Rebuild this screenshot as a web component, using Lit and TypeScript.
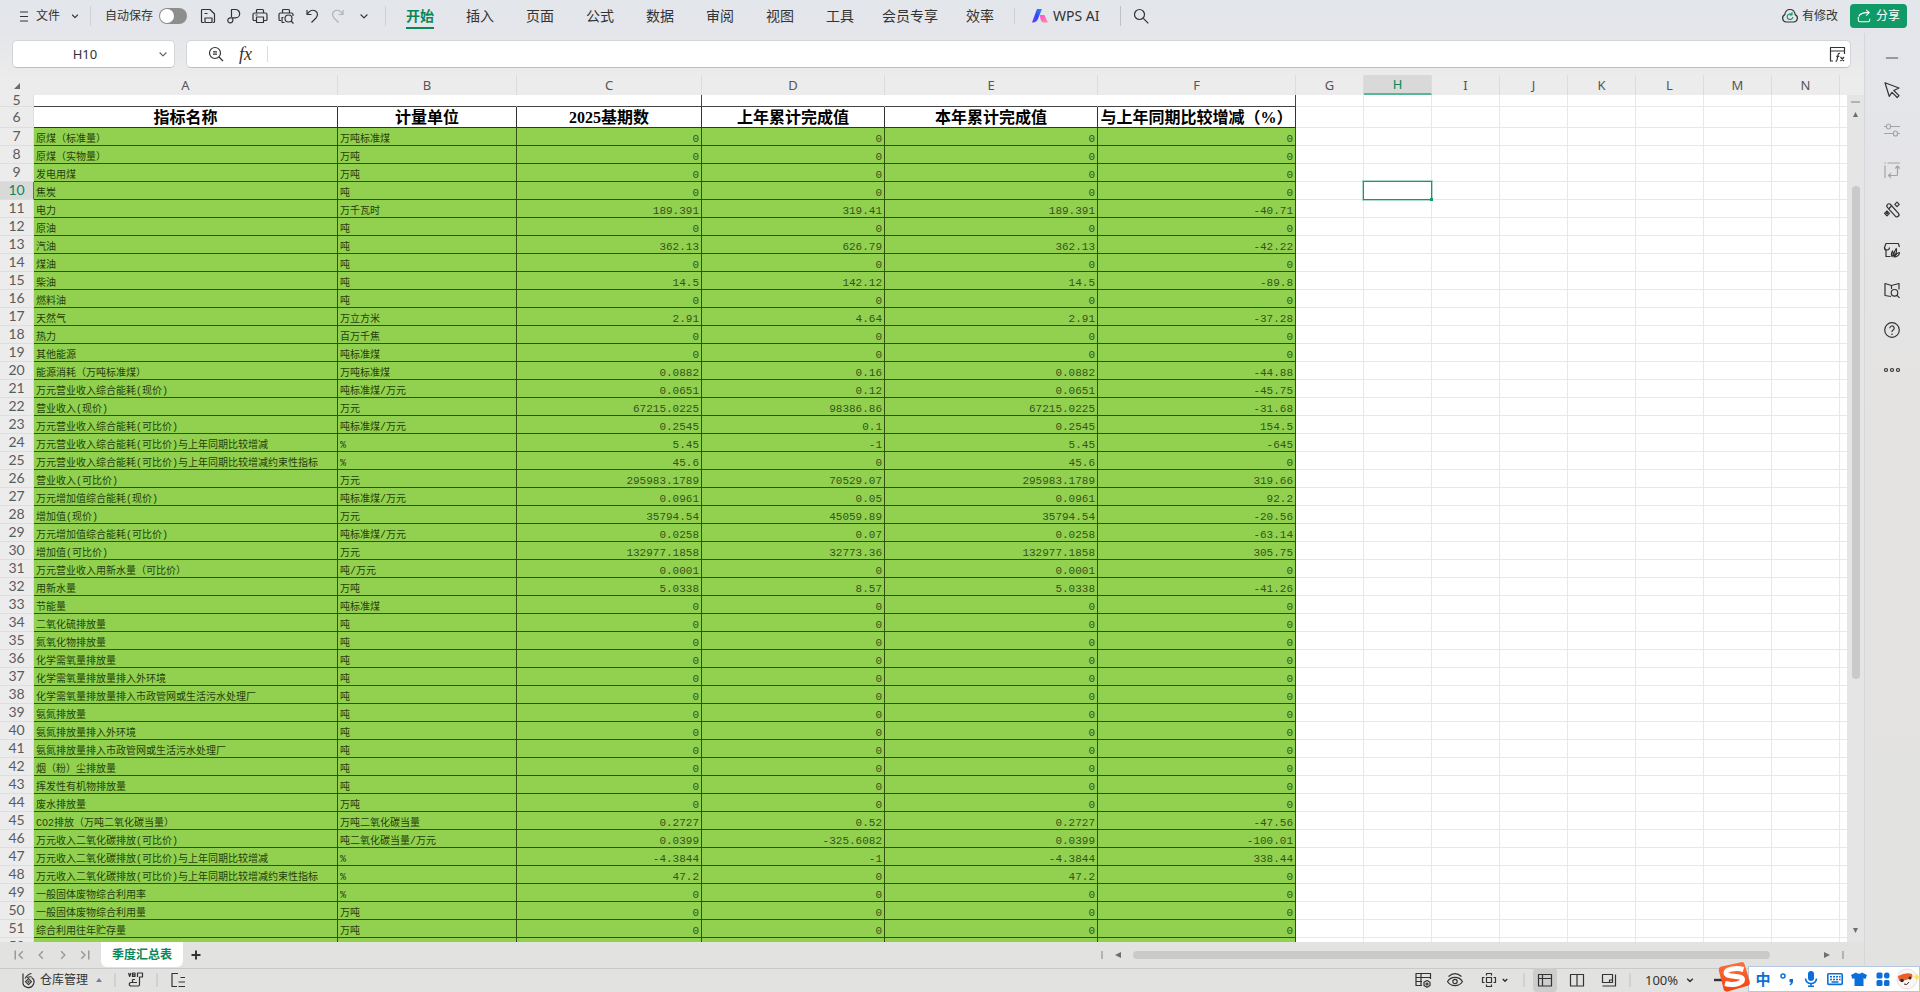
import { LitElement, html, css, svg, nothing } from "lit";
import { customElement, property, state } from "lit/decorators.js";
import { classMap } from "lit/directives/class-map.js";

type Row = [string, string, string, string, string, string];

const zero = (name: string, unit: string): Row => [name, unit, "0", "0", "0", "0"];

const HEADINGS = ["指标名称", "计量单位", "2025基期数", "上年累计完成值", "本年累计完成值", "与上年同期比较增减（%）"];

const ROWS: Row[] = [
  zero("原煤（标准量）", "万吨标准煤"),
  zero("原煤（实物量）", "万吨"),
  zero("发电用煤", "万吨"),
  zero("焦炭", "吨"),
  ["电力", "万千瓦时", "189.391", "319.41", "189.391", "-40.71"],
  zero("原油", "吨"),
  ["汽油", "吨", "362.13", "626.79", "362.13", "-42.22"],
  zero("煤油", "吨"),
  ["柴油", "吨", "14.5", "142.12", "14.5", "-89.8"],
  zero("燃料油", "吨"),
  ["天然气", "万立方米", "2.91", "4.64", "2.91", "-37.28"],
  zero("热力", "百万千焦"),
  zero("其他能源", "吨标准煤"),
  ["能源消耗（万吨标准煤）", "万吨标准煤", "0.0882", "0.16", "0.0882", "-44.88"],
  ["万元营业收入综合能耗(现价)", "吨标准煤/万元", "0.0651", "0.12", "0.0651", "-45.75"],
  ["营业收入(现价)", "万元", "67215.0225", "98386.86", "67215.0225", "-31.68"],
  ["万元营业收入综合能耗(可比价)", "吨标准煤/万元", "0.2545", "0.1", "0.2545", "154.5"],
  ["万元营业收入综合能耗(可比价)与上年同期比较增减", "%", "5.45", "-1", "5.45", "-645"],
  ["万元营业收入综合能耗(可比价)与上年同期比较增减约束性指标", "%", "45.6", "0", "45.6", "0"],
  ["营业收入(可比价)", "万元", "295983.1789", "70529.07", "295983.1789", "319.66"],
  ["万元增加值综合能耗(现价)", "吨标准煤/万元", "0.0961", "0.05", "0.0961", "92.2"],
  ["增加值(现价)", "万元", "35794.54", "45059.89", "35794.54", "-20.56"],
  ["万元增加值综合能耗(可比价)", "吨标准煤/万元", "0.0258", "0.07", "0.0258", "-63.14"],
  ["增加值(可比价)", "万元", "132977.1858", "32773.36", "132977.1858", "305.75"],
  ["万元营业收入用新水量（可比价）", "吨/万元", "0.0001", "0", "0.0001", "0"],
  ["用新水量", "万吨", "5.0338", "8.57", "5.0338", "-41.26"],
  zero("节能量", "吨标准煤"),
  zero("二氧化硫排放量", "吨"),
  zero("氮氧化物排放量", "吨"),
  zero("化学需氧量排放量", "吨"),
  zero("化学需氧量排放量排入外环境", "吨"),
  zero("化学需氧量排放量排入市政管网或生活污水处理厂", "吨"),
  zero("氨氮排放量", "吨"),
  zero("氨氮排放量排入外环境", "吨"),
  zero("氨氮排放量排入市政管网或生活污水处理厂", "吨"),
  zero("烟（粉）尘排放量", "吨"),
  zero("挥发性有机物排放量", "吨"),
  zero("废水排放量", "万吨"),
  ["CO2排放（万吨二氧化碳当量）", "万吨二氧化碳当量", "0.2727", "0.52", "0.2727", "-47.56"],
  ["万元收入二氧化碳排放(可比价)", "吨二氧化碳当量/万元", "0.0399", "-325.6082", "0.0399", "-100.01"],
  ["万元收入二氧化碳排放(可比价)与上年同期比较增减", "%", "-4.3844", "-1", "-4.3844", "338.44"],
  ["万元收入二氧化碳排放(可比价)与上年同期比较增减约束性指标", "%", "47.2", "0", "47.2", "0"],
  zero("一般固体废物综合利用率", "%"),
  zero("一般固体废物综合利用量", "万吨"),
  zero("综合利用往年贮存量", "万吨"),
  ["", "", "", "", "", ""],
];

const COLUMNS = [..."ABCDEFGHIJKLMN"];
const BLANK_COLUMNS = COLUMNS.slice(6);
const TABS = ["开始", "插入", "页面", "公式", "数据", "审阅", "视图", "工具", "会员专享", "效率"];

const ICONS = {
  menu: svg`<path d="M4 4h8M4 8.500h8M4 13h8"/>`,
  down: svg`<path d="M3.500 6 8 10.500 12.500 6"/>`,
  save: svg`<path d="M4 14.500H2.500a1 1 0 0 1-1-1v-11a1 1 0 0 1 1-1H10l4.500 4.500v7.500a1 1 0 0 1-1 1H13"/><path d="M4.500 5.500h3M5 14.500V10h7v4.500z"/>`,
  pdf: svg`<path d="M5.500 9V1.500h4a4.200 4.200 0 0 1 0 8.400H4.500a2.500 2.500 0 1 0 2.300 2.600V10"/>`,
  print: svg`<path d="M4.500 5V2.500a1 1 0 0 1 1-1h5a1 1 0 0 1 1 1V5M4 12.500H2a1 1 0 0 1-1-1V6.500a1.500 1.500 0 0 1 1.500-1.500h11A1.500 1.500 0 0 1 15 6.500v5a1 1 0 0 1-1 1h-2"/><path d="M4.500 9h7v5.500h-7zM3.500 7h2"/>`,
  preview: svg`<path d="M4.500 5V2.500a1 1 0 0 1 1-1h5a1 1 0 0 1 1 1V5M3 12.500H2a1 1 0 0 1-1-1V6.500A1.500 1.500 0 0 1 2.500 5h11A1.500 1.500 0 0 1 15 6.500V8M4 14.500h2.500M4 14.500V9.500h1.500"/><circle cx="10.500" cy="10.500" r="3.500"/><path d="m13 13 2.500 2.500"/>`,
  undo: svg`<path d="M3 2v4.500h4.500M3.200 6.300C5.500 2.500 9 1.500 11.500 3s2.500 4.800.5 7L7.500 14.500"/>`,
  redo: svg`<path d="M13 2v4.500H8.500M12.800 6.300C10.500 2.500 7 1.500 4.500 3s-2.500 4.800-.5 7l4.500 4.500"/>`,
  search: svg`<circle cx="6.500" cy="6.500" r="5"/><path d="m10.300 10.300 5 5"/>`,
  cloud: svg`<path d="M4.300 14a3.900 3.900 0 0 1-1.500-7.400C3.200 3.700 5.300 1.500 8 1.500s4.800 2.200 5.200 5.100A3.900 3.900 0 0 1 11.700 14z"/><path class="accent" d="M9.500 6.300A2.800 2.800 0 1 0 10.800 9M10 4.200v2.600H7.500"/>`,
  share: svg`<path d="M1.500 9v3.500a2 2 0 0 0 2 2h9a2 2 0 0 0 2-2V11M2 8.500C3.500 5 7.500 3.800 13.500 4.200M10.500 1l3.500 3.200-3.500 3.300"/>`,
  find: svg`<circle cx="7" cy="7" r="5.500"/><path d="M5 5.800h4M5 8.200h4M11 11l4 4"/>`,
  fxBox: svg`<path d="M4 15H1.500V1.500h14V8M1.500 5h14"/><path d="M11 7.500c-1-.5-1.700 0-1.900 1L8 14c-.2 1-.6 1.200-1.500 1M7.300 10.300h3M11.500 11l3.500 4M15 11l-3.500 4"/>`,
  arrow: svg`<path d="m1 .800 14 5.200-5.200 2.500 5.200 5.200-1.800 1.800L8 10.300l-2.800 4z"/>`,
  sliders: svg`<path d="M0 4.500h2.500M7 4.500h9M0 11.500h9M13.500 11.500H16"/><rect x="2.500" y="2" width="4" height="5" rx="2"/><rect x="9.500" y="9" width="4" height="5" rx="2"/>`,
  transform: svg`<path d="M3.500 1H16M1 3.500V16M.300 1h1.500M13.500 4v8.500a1 1 0 0 1-1 1H5M11.300 6.500l2.200-2.500 2.200 2.500M7 11.300l-2.500 2.200L7 15.700"/>`,
  magic: svg`<rect x="-2" y="-7.500" width="4.200" height="16" rx="2.100" transform="translate(8.500 8) rotate(-42)"/><path d="m4.500 7 3-3"/><path d="m13 .200 2.200 2.200L13 4.600l-2.200-2.200zM3 8.800l2.500 2.500L3 13.800.500 11.300z"/><circle cx="3" cy="11.300" r=".700"/>`,
  sketch: svg`<path d="M6.500 14.500H2V8.300A2.800 2.800 0 0 1 .500 5.500L2 1.500h12.300l1.200 3.500"/><path d="M.500 5.500a2.500 2.500 0 0 0 5 0"/><path d="M8 14.500c-1-2-.7-3.800.5-5.500 1 2 .8 4-.5 5.500zM10 14.800c-.5-3.300.4-5.800 2.200-8.300.8 3 0 5.800-2.200 8.300zM11 15c.5-2.500 2-4 4.500-4.500-.2 2.500-1.800 4-4.500 4.500z"/>`,
  book: svg`<path d="M7.500 3.500 1 1.500v12l6 1M7.500 3.500 15 1.500v6M7.500 3.500V7"/><circle cx="10.500" cy="10.800" r="3.300"/><path d="m13 13.300 2.500 2.500"/>`,
  help: svg`<circle cx="8" cy="8" r="7.300"/><path d="M5.800 6.200a2.200 2.200 0 1 1 3.300 1.900c-.8.500-1.100.9-1.100 1.900M8 11.500V13"/>`,
  more: svg`<circle cx="2" cy="8" r="1.500"/><circle cx="8" cy="8" r="1.500"/><circle cx="14" cy="8" r="1.500"/>`,
  store: svg`<path d="M3 1.500v8a5.500 5.500 0 1 0 8.500-4M5 6.500C6.500 4 8.500 2 11.500 1.500M7 5.500 11.500 4.500"/><path d="m8.500 6.700 3 3-3 3-3-3z"/><circle cx="8.500" cy="9.700" r=".500"/>`,
  vba: svg`<path d="M.500 1l1.200 3.500L2.900 1M4.500 1v3.500H7V1zM4.500 2.800H7M9.500 5V1H14.500v4H11.500v7.500a1.500 1.500 0 0 1-1.500 1.500H3a1.600 1.600 0 1 1 0-3.500h6M4.500 7.500v3M4.500 7.500H7"/>`,
  outline: svg`<path d="M8 1.500H2v13h5M10.500 5.500H15M8.500 10h6.500M8.500 14.500h6.500"/>`,
  tableCog: svg`<path d="M7 13.500H1v-12h14.500V7M1 5.500h14.500M1 9.500h6M6 1.500v12"/><path d="m12 8.500 3 1.700v3.300l-3 1.800-3-1.800v-3.300z"/><circle cx="12" cy="12" r="1"/>`,
  eye: svg`<path d="M1.500 4.500c4-3.500 9-3.500 13 0M.500 9.500C4 4 12 4 15.500 9.500 12 15 4 15 .500 9.500z"/><circle cx="8" cy="9.500" r="2.200"/>`,
  cross: svg`<rect x="5.500" y="5.500" width="5" height="5"/><path d="M5.500 3.500v-2h5v2M5.500 12.500v2h5v-2M3.500 5.500h-2v5h2M12.500 5.500h2v5h-2"/>`,
  normal: svg`<rect x="1.500" y="2.500" width="13" height="11.500"/><path d="M5.500 2.500V14M1.500 6.500h13"/>`,
  split: svg`<rect x="1.500" y="2.500" width="13" height="11.500"/><path d="M8 2.500V14"/>`,
  pages: svg`<path d="M1.500 2.500h10v8h-10zM14.500 2.500V14h-13M8.500 10.500v-2.500h3"/>`,
  minus: svg`<path d="M1 8h14"/>`,
  plus: svg`<path d="M8 2v12M2 8h12"/>`,
  first: svg`<path d="M3 2v12M13 3 8 8l5 5"/>`,
  prev: svg`<path d="M10.500 3 5.500 8l5 5"/>`,
  next: svg`<path d="m5.500 3 5 5-5 5"/>`,
  last: svg`<path d="M13 2v12M3 3l5 5-5 5"/>`,
};
type IconName = keyof typeof ICONS;

@customElement("ui-icon")
export class UiIcon extends LitElement {
  @property() name: IconName = "more";

  static styles = css`
    :host { display: block; width: 16px; height: 16px; flex: none; }
    svg { display: block; width: 100%; height: 100%; overflow: visible; fill: none; stroke: currentColor; stroke-width: var(--stroke, 1.2); stroke-linejoin: round; }
    .accent { stroke: #109a68; }
  `;

  render() {
    return html`<svg viewBox="0 0 16 16" aria-hidden="true">${ICONS[this.name]}</svg>`;
  }
}

const base = css`
  * { box-sizing: border-box; }
  button, input, select { font: inherit; color: inherit; margin: 0; padding: 0; border: 0; background: none; outline: none; }
  button { display: flex; align-items: center; justify-content: center; white-space: nowrap; }
  .sep { width: 1px; height: 20px; background: #cfd2d5; flex: none; }
  .tiny { width: 10px; height: 10px; --stroke: 1.8; }
`;

@customElement("menu-bar")
export class MenuBar extends LitElement {
  @state() private active = "开始";

  static styles = [base, css`
    :host { display: flex; align-items: center; justify-content: space-between; height: 33px; padding: 0 13px 2px 16px; }
    .group { display: flex; align-items: center; }
    .file { gap: 4px; }
    .file .tiny { margin-left: 6px; }
    .file + .sep { margin: 0 14px 0 10px; }
    .autosave { display: flex; align-items: center; gap: 6px; }
    .autosave input { appearance: none; width: 28px; height: 16px; border-radius: 8px; background: #8d8d8d; }
    .autosave input::before { content: ""; display: block; width: 14px; height: 14px; margin: 1px; border-radius: 7px; background: #fff; }
    .quick { display: flex; margin: 0 8px; }
    .quick button { width: 26px; height: 26px; }
    .quick .off { color: #b0b2b5; }
    .quick .tiny { width: 12px; height: 12px; --stroke: 1.5; }
    .tabs { display: flex; margin-left: 4px; }
    .tab { min-width: 60px; height: 31px; padding: 0 12px; font-size: 14px; line-height: 20px; }
    .tab span { padding: 4px 0 1px; border-bottom: 2px solid transparent; }
    .tab.on span { color: #0b8659; font-weight: 700; border-color: #0b8659; }
    .tabs + .sep { margin: 0 17px 0 4px; height: 16px; }
    .ai { gap: 5px; font-size: 14px; }
    .ai svg { width: 16px; height: 14px; }
    .ai + .sep { height: 20px; margin: 0 12px 0 20px; background: #bfc2c6; }
    .changes { gap: 4px; margin-right: 12px; }
    .share { height: 24px; padding: 0 7px; gap: 5px; border-radius: 4px; background: #109a68; color: #fff; }
    .share ui-icon { width: 14px; height: 14px; }
  `];

  render() {
    const quick: IconName[] = ["save", "pdf", "print", "preview", "undo", "redo"];
    return html`
      <div class="group">
        <button class="file"><ui-icon name="menu"></ui-icon>文件<ui-icon class="tiny" name="down"></ui-icon></button>
        <span class="sep"></span>
        <label class="autosave">自动保存<input type="checkbox" role="switch" /></label>
        <div class="quick">
          ${quick.map((n) => html`<button class=${classMap({ off: n === "redo" })} aria-label=${n}><ui-icon name=${n}></ui-icon></button>`)}
          <button aria-label="more"><ui-icon class="tiny" name="down"></ui-icon></button>
        </div>
        <span class="sep"></span>
        <nav class="tabs">
          ${TABS.map((t) => html`<button class=${classMap({ tab: true, on: t === this.active })} @click=${() => (this.active = t)}><span>${t}</span></button>`)}
        </nav>
        <span class="sep"></span>
        <button class="ai">
          <svg viewBox="0 0 16 14" aria-hidden="true">
            <defs>
              <linearGradient id="a" x1="0" y1="1" x2="1" y2="0"><stop offset="0" stop-color="#6a3df5" /><stop offset=".5" stop-color="#2b4df2" /><stop offset="1" stop-color="#2f8dff" /></linearGradient>
              <linearGradient id="b" x1="0" y1="0" x2="1" y2="1"><stop offset="0" stop-color="#ff4fd0" /><stop offset="1" stop-color="#ff8f9a" /></linearGradient>
            </defs>
            <path fill="url(#a)" d="M5 0h5L6.500 8.500C5.500 12 4 13.500 0 13.500z" />
            <path fill="url(#b)" d="M8 6h4.500L16 13.500h-4.500C9.500 13.500 8 10 8 6z" />
          </svg>WPS AI
        </button>
        <span class="sep"></span>
        <button aria-label="search"><ui-icon name="search"></ui-icon></button>
      </div>
      <div class="group">
        <button class="changes"><ui-icon name="cloud"></ui-icon>有修改</button>
        <button class="share"><ui-icon name="share"></ui-icon>分享</button>
      </div>
    `;
  }
}

@customElement("formula-bar")
export class FormulaBar extends LitElement {
  static styles = [base, css`
    :host { display: flex; gap: 11px; padding: 7px 13px 7px 12px; }
    .box { display: flex; align-items: center; height: 28px; border: 1px solid #d3d4d6; border-bottom-color: #bcbdbf; border-radius: 5px; background: #fff; }
    .name { width: 163px; padding-right: 5px; }
    .name input { flex: 1; min-width: 0; text-align: center; font-size: 13px; }
    .name ui-icon { width: 12px; height: 12px; color: #666; --stroke: 1.6; }
    .formula { flex: 1; min-width: 0; padding: 0 5px 0 21px; gap: 15px; }
    .formula input { flex: 1; min-width: 0; height: 20px; }
    .fx { font: italic 18px/20px "Liberation Serif", serif; }
    .sep { height: 16px; background: #dcdcdc; }
  `];

  render() {
    return html`
      <div class="box name"><input aria-label="名称框" .value=${"H10"} /><ui-icon name="down"></ui-icon></div>
      <div class="box formula">
        <ui-icon name="find"></ui-icon>
        <button class="fx">fx</button>
        <span class="sep"></span>
        <input aria-label="编辑栏" />
        <button aria-label="fx"><ui-icon name="fxBox"></ui-icon></button>
      </div>
    `;
  }
}

@customElement("sheet-grid")
export class SheetGrid extends LitElement {
  static styles = [base, css`
    :host { display: flex; flex: 1; min-height: 0; overflow: hidden; }
    .view { flex: 1; min-width: 0; overflow: hidden; background: #fff; }
    table { width: 100%; table-layout: fixed; border-collapse: separate; border-spacing: 0; }
    th, td { padding: 0; overflow: hidden; white-space: nowrap; border: solid #e8e8e8; border-width: 0 1px 1px 0; }
    .w-no { width: 34px; } .w-A { width: 304px; } .w-B { width: 179px; } .w-C { width: 185px; } .w-D { width: 183px; }
    .w-E { width: 213px; } .w-F { width: 198px; } .w-blank { width: 68px; }
    thead th { height: 20px; background: #ececec; border-color: #dcdcdc; border-bottom: 0; font-weight: 400; font-size: 13px; line-height: 18px; color: #555; }
    thead th:last-child, tbody td:last-child { border-right: 0; }
    thead .picked { background: #d9d9d9; color: #0b8659; border-bottom: 2px solid #58b894; }
    .corner { border-right: 0; }
    .corner svg { display: block; width: 6px; height: 6px; margin: 2px 0 0 14px; fill: #6b6b6b; }
    .no { height: 18px; overflow: visible; background: #ececec; border-color: #dedede; font: 400 14px/15px Lato, sans-serif; color: #5b5b5b; vertical-align: top; }
    .no.picked { background: #d9d9d9; color: #0b8659; border-right-color: #109a68; }
    .clipped > * { height: 12px; line-height: 10px; }
    .clipped .data { border-right-color: #fff; border-bottom-color: #444; }
    .clipped .edge { border-right-color: #444; }
    .heads > * { height: 21px; }
    .heads .no { line-height: 19px; }
    .heads .data { padding-top: 1px; font: 700 16px/19px "Liberation Serif", "Noto Sans CJK SC", sans-serif; color: #000; text-align: center; border-color: #333; }
    .cell { height: 18px; padding: 0 2px; vertical-align: bottom; background: #92d14f; border-color: #33510f; color: #24400c; font-size: 10px; line-height: 11px; font-family: "Liberation Mono", "Noto Sans CJK SC", monospace; }
    .num { text-align: right; font-size: 11px; padding-right: 2px; color: #34541a; }
    .selected { position: relative; overflow: visible; }
    .selected::before { content: ""; position: absolute; inset: -1px; border: 1px solid #149a69; box-shadow: 0 0 0 1px rgba(20, 154, 105, 0.35); }
    .selected::after { content: ""; position: absolute; right: -2px; bottom: -2px; width: 3px; height: 3px; background: #149a69; }
    .rail { width: 17px; flex: none; display: flex; flex-direction: column; align-items: center; background: #e5e5e5; }
    .rail-top { width: 100%; height: 20px; background: #ececec; }
    .grip { width: 9px; height: 2px; margin-top: 6px; background: #b3b3b3; }
    .rail svg { width: 5px; height: 5px; fill: #6e6e6e; margin: 9px 0; }
    .track { flex: 1; width: 8px; padding: 60px 0 240px; }
    .thumb { height: 100%; border-radius: 4px; background: #cacaca; }
  `];

  private blanks(row: number) {
    return html`${BLANK_COLUMNS.map((c) => html`<td class=${row === 10 && c === "H" ? "selected" : nothing}></td>`)}<td></td>`;
  }

  render() {
    return html`
      <div class="view">
        <table>
          <colgroup>
            <col class="w-no" />
            ${COLUMNS.map((c, i) => html`<col class=${i < 6 ? `w-${c}` : "w-blank"} />`)}
            <col />
          </colgroup>
          <thead>
            <tr>
              <th class="corner"><svg viewBox="0 0 6 6"><path d="M6 0v6H0z" /></svg></th>
              ${COLUMNS.map((c) => html`<th class=${c === "H" ? "picked" : nothing}>${c}</th>`)}
              <th></th>
            </tr>
          </thead>
          <tbody>
            <tr class="clipped">
              <th class="no">5</th>
              ${HEADINGS.map((_, i) => html`<td class=${classMap({ data: true, edge: i === 2 || i === 5 })}></td>`)}
              ${this.blanks(5)}
            </tr>
            <tr class="heads">
              <th class="no">6</th>
              ${HEADINGS.map((h) => html`<th class="data">${h}</th>`)}
              ${this.blanks(6)}
            </tr>
            ${ROWS.map((r, i) => html`
              <tr>
                <th class=${classMap({ no: true, picked: i === 3 })}>${i + 7}</th>
                ${r.map((v, j) => html`<td class=${classMap({ cell: true, num: j > 1 })}>${v}</td>`)}
                ${this.blanks(i + 7)}
              </tr>`)}
          </tbody>
        </table>
      </div>
      <div class="rail">
        <div class="rail-top"></div>
        <div class="grip"></div>
        <svg viewBox="0 0 8 8"><path d="M4 0 8 8H0z" /></svg>
        <div class="track"><div class="thumb"></div></div>
        <svg viewBox="0 0 8 8"><path d="M4 8 0 0h8z" /></svg>
      </div>
    `;
  }
}

@customElement("sheet-tabs")
export class SheetTabs extends LitElement {
  static styles = [base, css`
    :host { display: flex; justify-content: space-between; height: 26px; background: #e2e2e1; }
    .group { display: flex; align-items: center; }
    .left { padding-left: 8px; }
    .nav { width: 22px; height: 26px; color: #9a9a9a; }
    .nav ui-icon, .add ui-icon { width: 12px; height: 12px; --stroke: 2; }
    .sheet { height: 25px; margin: 0 7px 1px 5px; padding: 0 11px; border-radius: 0 0 6px 6px; background: #fff; color: #0b8659; font-weight: 700; }
    .add ui-icon { --stroke: 2.6; }
    .right { flex: 0 1 763px; padding-right: 20px; gap: 12px; }
    .bar { width: 2px; height: 8px; background: #b3b3b3; }
    .right svg { width: 6px; height: 6px; fill: #6e6e6e; }
    .track { flex: 1; padding-right: 42px; }
    .thumb { height: 8px; border-radius: 4px; background: #cacaca; }
  `];

  render() {
    const nav: IconName[] = ["first", "prev", "next", "last"];
    return html`
      <div class="group left">
        ${nav.map((n) => html`<button class="nav" aria-label=${n}><ui-icon name=${n}></ui-icon></button>`)}
        <button class="sheet">季度汇总表</button>
        <button class="add" aria-label="add"><ui-icon name="plus"></ui-icon></button>
      </div>
      <div class="group right">
        <span class="bar"></span>
        <svg viewBox="0 0 8 8"><path d="M0 4 8 0v8z" /></svg>
        <div class="track"><div class="thumb"></div></div>
        <svg viewBox="0 0 8 8"><path d="M8 4 0 8V0z" /></svg>
        <span class="bar"></span>
      </div>
    `;
  }
}

@customElement("side-panel")
export class SidePanel extends LitElement {
  static styles = [base, css`
    :host { display: flex; flex-direction: column; align-items: center; width: 56px; flex: none; padding: 17px 2px 0 0; border-left: 1px solid #d6d7d9; }
    .dash { width: 14px; height: 16px; color: #8f8f8f; --stroke: 2; }
    button { width: 32px; height: 40px; }
    .dash + button { margin-top: 4px; }
    .off { color: #a3a4a6; }
  `];

  render() {
    const items: IconName[] = ["arrow", "sliders", "transform", "magic", "sketch", "book", "help", "more"];
    return html`
      <ui-icon class="dash" name="minus"></ui-icon>
      ${items.map((n) => html`<button class=${classMap({ off: n === "sliders" || n === "transform" })} aria-label=${n}><ui-icon name=${n}></ui-icon></button>`)}
    `;
  }
}

@customElement("status-bar")
export class StatusBar extends LitElement {
  static styles = [base, css`
    :host { display: flex; justify-content: space-between; align-items: center; height: 24px; padding-bottom: 1px; border-top: 1px solid #c9c9c9; }
    .group { display: flex; align-items: center; gap: 8px; }
    .left { padding-left: 20px; gap: 12px; }
    .book { gap: 4px; }
    .book svg { width: 6px; height: 4px; margin-left: 4px; fill: #71809c; }
    .sep { width: 2px; height: 14px; }
    .right { padding-right: 187px; }
    .right button { width: 24px; height: 24px; border-radius: 4px; }
    .right .wide { width: 40px; gap: 4px; }
    .wide .tiny { width: 8px; --stroke: 3; }
    .right .on { background: #cdcdcd; }
    .zoom { display: flex; align-items: center; width: 62px; padding-left: 6px; }
    .zoom select { appearance: none; width: 40px; font-size: 13px; }
    .zoom .tiny { --stroke: 2.4; }
    .minus { --stroke: 2.4; }
  `];

  render() {
    return html`
      <div class="group left">
        <button class="book"><ui-icon name="store"></ui-icon>仓库管理<svg viewBox="0 0 6 4"><path d="M3 0 6 4H0z" /></svg></button>
        <span class="sep"></span>
        <button aria-label="vba"><ui-icon name="vba"></ui-icon></button>
        <span class="sep"></span>
        <button aria-label="outline"><ui-icon name="outline"></ui-icon></button>
      </div>
      <div class="group right">
        <button aria-label="table"><ui-icon name="tableCog"></ui-icon></button>
        <button aria-label="eye"><ui-icon name="eye"></ui-icon></button>
        <button class="wide" aria-label="cross"><ui-icon name="cross"></ui-icon><ui-icon class="tiny" name="down"></ui-icon></button>
        <span class="sep"></span>
        <button class="on" aria-label="normal"><ui-icon name="normal"></ui-icon></button>
        <button aria-label="split"><ui-icon name="split"></ui-icon></button>
        <button aria-label="pages"><ui-icon name="pages"></ui-icon></button>
        <span class="sep"></span>
        <label class="zoom"><select aria-label="缩放"><option>100%</option></select><ui-icon class="tiny" name="down"></ui-icon></label>
        <button class="minus" aria-label="minus"><ui-icon name="minus"></ui-icon></button>
      </div>
    `;
  }
}

@customElement("ime-bar")
export class ImeBar extends LitElement {
  static styles = [base, css`
    :host { position: fixed; right: 0; bottom: 0; display: flex; align-items: center; width: 172px; height: 26px; padding-left: 2px; border: 1px solid #b3c6e2; background: #fff; color: #0a6fd8; }
    button { width: 24px; height: 24px; }
    .zh { font: 700 15px/20px "Noto Sans CJK SC", sans-serif; }
    button svg { width: 16px; height: 16px; fill: currentColor; }
    .face svg { width: 22px; height: 22px; overflow: visible; }
    .logo { position: absolute; right: 168px; bottom: -2px; width: 34px; height: 32px; }
  `];

  render() {
    return html`
      <svg class="logo" viewBox="0 0 34 32" aria-hidden="true">
        <defs><linearGradient id="s" x1="0" y1="0" x2="0" y2="1"><stop offset="0" stop-color="#ff6f3a" /><stop offset="1" stop-color="#f04410" /></linearGradient></defs>
        <path fill="url(#s)" d="M3.500 5.800 24 1.200q3-.5 3.600 2l5.200 17.600q.6 3-2 4L10.500 30.500q-3 .6-3.800-2L1.800 9.500q-.4-3 1.700-3.700z" />
        <path fill="none" stroke="#fff" stroke-width="5" stroke-linecap="butt" d="M26.500 8.500C19 6.500 9 8 9 12c0 4.500 16.500 2 16.500 6.500 0 4.500-10 6-17.500 4" />
      </svg>
      <button class="zh">中</button>
      <button aria-label="punctuation"><svg viewBox="0 0 16 16"><circle cx="4" cy="5" r="2" fill="none" stroke="currentColor" stroke-width="1.500" /><path d="M10.500 8h3.500v3q-.5 3-3 3.500l-.5-1q1.500-.8 1.500-2.200h-1.500z" /></svg></button>
      <button aria-label="microphone"><svg viewBox="0 0 16 16"><rect x="5" y="0" width="6" height="10" rx="3" /><path d="M2.500 7.500a5.500 5 0 0 0 11 0M8 12.500V15M5 15.200h6" fill="none" stroke="currentColor" stroke-width="1.600" /></svg></button>
      <button aria-label="keyboard"><svg viewBox="0 0 16 16"><rect x=".800" y="2.800" width="14.400" height="10.600" rx="1" fill="none" stroke="currentColor" stroke-width="1.600" /><path d="M3 5h2v1.600H3zM6 5h2v1.600H6zM9 5h2v1.600H9zM12 5h1.600v1.600H12zM3 7.700h2v1.500H3zM6 7.700h2v1.500H6zM9 7.700h2v1.500H9zM12 7.700h1.600v1.500H12zM4.500 10.300h7v1.400h-7z" /></svg></button>
      <button aria-label="skin"><svg viewBox="0 0 16 16"><path d="M5 1.500q3 2.500 6 0l5 2.500-1.500 4-2-.8V15h-9V7.200l-2 .8L0 4z" /></svg></button>
      <button aria-label="apps"><svg viewBox="0 0 16 16"><rect x="1.500" y="1.500" width="6" height="6" rx="1.500" /><rect x="9" y="1.500" width="5.500" height="6" rx="2.500" /><rect x="1.500" y="9" width="6" height="6" rx="1.500" /><rect x="9" y="9" width="5.500" height="6" rx="1.500" /></svg></button>
      <button class="face" aria-label="assistant"><svg viewBox="0 0 22 22"><circle cx="11" cy="11" r="10" fill="#faf6f6" stroke="#e9dfe0" /><path d="M2 8q8-4 14-2l.5 3Q10 13 3 13z" fill="#e8602c" /><circle cx="6" cy="12.500" r="1.800" fill="#3a2520" /><circle cx="14" cy="10" r="1.500" fill="#3a2520" /><path d="M8 16q3 2 5-2" stroke="#3a2520" fill="none" /><path d="m21 5 1.200 3L25 9l-2.800 1.200L21 13l-1.200-2.800L17 9l2.800-1z" fill="#ffe14d" /></svg></button>
    `;
  }
}

@customElement("app-root")
export class AppRoot extends LitElement {
  static styles = [base, css`
    :host { display: flex; flex-direction: column; height: 100vh; overflow: hidden; font: 12px/18px "Noto Sans", "Noto Sans CJK SC", sans-serif; color: #333; background: linear-gradient(#e3e6eb, #e4e5e9 120px, #e4e3e1 420px, #e2e2e1); }
    .body { display: flex; flex: 1; min-height: 0; }
    .main { display: flex; flex-direction: column; flex: 1; min-width: 0; background: linear-gradient(#e4e6ea, #ececec 48px); }
  `];

  render() {
    return html`
      <menu-bar></menu-bar>
      <div class="body">
        <div class="main">
          <formula-bar></formula-bar>
          <sheet-grid></sheet-grid>
          <sheet-tabs></sheet-tabs>
        </div>
        <side-panel></side-panel>
      </div>
      <status-bar></status-bar>
      <ime-bar></ime-bar>
    `;
  }
}
